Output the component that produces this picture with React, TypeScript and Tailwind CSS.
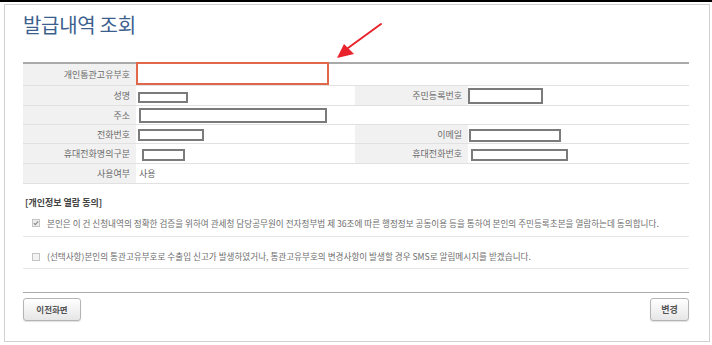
import React from "react";

const font = { fontFamily: '"Noto Sans CJK KR", "Noto Sans", sans-serif' };

function Box({ w, h, ml = 0, mt = 0 }: { w: number; h: number; ml?: number; mt?: number }) {
  return (
    <div
      className="border-2 border-[#7b7b7b] bg-white box-border"
      style={{ width: w, height: h, marginLeft: ml, marginTop: mt }}
    />
  );
}

function Label({ children }: { children: React.ReactNode }) {
  return (
    <div className="w-[113px] shrink-0 bg-[#f1f1f1] flex items-center justify-end pr-[6px] text-[9px] text-[#6b6b6b] leading-none">
      {children}
    </div>
  );
}

function Check({ checked }: { checked?: boolean }) {
  return (
    <svg width="8" height="8" viewBox="0 0 8 8" className="shrink-0">
      <rect x="0.5" y="0.5" width="7" height="7" fill={checked ? "#ececec" : "#f2f2f2"} stroke="#c4c4c4" />
      {checked && <path d="M1.8 4.2 L3.3 5.6 L6.2 2.3" fill="none" stroke="#8a8a8a" strokeWidth="1.1" />}
    </svg>
  );
}

export default function App() {
  return (
    <div className="w-[712px] h-[345px] bg-white relative overflow-hidden" style={font}>
      <div className="h-[2px] bg-black" />
      <div className="ml-[4px] mt-[2px] w-[706px] h-[338px] border border-[#d2d2d2] box-border pl-[18px] pr-[20px] pt-[8px]">
        <div className="h-[24px] leading-[24px] text-[20px] tracking-[-0.3px] text-[#3d5f8e]">발급내역 조회</div>

        {/* table */}
        <div className="mt-[25px] w-[666px] border-t-2 border-[#a9a9a9]">
          {/* row 1 */}
          <div className="flex h-[22px] border-b border-[#e1e1e1]">
            <Label>개인통관고유부호</Label>
            <div className="relative flex-1">
              <div className="absolute left-0 top-[-2px] w-[193px] h-[23px] border-2 border-[#e0674a] box-border" />
            </div>
          </div>
          {/* row 2 */}
          <div className="flex h-[20px] border-b border-[#e1e1e1]">
            <Label>성명</Label>
            <div className="w-[219px] flex items-start">
              <Box w={50} h={11} ml={2} mt={6} />
            </div>
            <Label>주민등록번호</Label>
            <div className="flex-1 flex items-start">
              <Box w={75} h={16} mt={2} />
            </div>
          </div>
          {/* row 3 */}
          <div className="flex h-[19px] border-b border-[#e1e1e1]">
            <Label>주소</Label>
            <div className="flex-1 flex items-start">
              <Box w={188} h={15} ml={3} mt={2} />
            </div>
          </div>
          {/* row 4 */}
          <div className="flex h-[19px] border-b border-[#e1e1e1]">
            <Label>전화번호</Label>
            <div className="w-[219px] flex items-start">
              <Box w={66} h={12} ml={2} mt={4} />
            </div>
            <Label>이메일</Label>
            <div className="flex-1 flex items-start">
              <Box w={92} h={13} ml={1} mt={4} />
            </div>
          </div>
          {/* row 5 */}
          <div className="flex h-[20px] border-b border-[#e1e1e1]">
            <Label>휴대전화명의구분</Label>
            <div className="w-[219px] flex items-start">
              <Box w={43} h={12} ml={6} mt={5} />
            </div>
            <Label>휴대전화번호</Label>
            <div className="flex-1 flex items-start">
              <Box w={97} h={12} ml={3} mt={5} />
            </div>
          </div>
          {/* row 6 */}
          <div className="flex h-[20px] border-b border-[#e1e1e1]">
            <Label>사용여부</Label>
            <div className="flex-1 flex items-center pl-[3px] text-[9px] text-[#666] leading-none">사용</div>
          </div>
        </div>

        {/* consent */}
        <div className="mt-[12px] h-[14px] leading-[14px] pl-[2px] text-[9px] font-bold text-[#444]">[개인정보 열람 동의]</div>
        <div className="w-[666px] h-[27px] border-b border-[#e6e6e6] flex items-center pl-[9px] gap-[7px] text-[8.6px] text-[#6e6e6e] leading-none">
          <Check checked />
          <span>본인은 이 건 신청내역의 정확한 검증을 위하여 관세청 담당공무원이 전자정부법 제 36조에 따른 행정정보 공동이용 등을 통하여 본인의 주민등록초본을 열람하는데 동의합니다.</span>
        </div>
        <div className="w-[666px] h-[32px] border-b border-[#e6e6e6] flex items-center pt-[8px] pl-[9px] gap-[7px] text-[8.6px] text-[#6e6e6e] leading-none">
          <Check />
          <span>(선택사항)본인의 통관고유부호로 수출입 신고가 발생하였거나, 통관고유부호의 변경사항이 발생할 경우 SMS로 알림메시지를 받겠습니다.</span>
        </div>
        <div className="w-[666px] h-[24px] border-b border-[#ababab]" />

        {/* buttons */}
        <div className="w-[666px] mt-[5px] flex justify-between">
          <button className="w-[58px] h-[23px] rounded-[3px] border border-[#b4b4b4] bg-gradient-to-b from-[#ffffff] to-[#e6e6e6] shadow-[0_1px_1px_rgba(0,0,0,0.12)] text-[8.5px] font-bold text-[#555] leading-none">
            이전화면
          </button>
          <button className="w-[39px] h-[23px] rounded-[3px] border border-[#b4b4b4] bg-gradient-to-b from-[#ffffff] to-[#e6e6e6] shadow-[0_1px_1px_rgba(0,0,0,0.12)] text-[9px] font-bold text-[#555] leading-none">
            변경
          </button>
        </div>
      </div>

      {/* red annotation arrow */}
      <svg className="absolute left-[330px] top-[18px]" width="60" height="45" viewBox="330 18 60 45">
        <line x1="381" y1="24" x2="348" y2="48" stroke="#e8232b" strokeWidth="2" strokeLinecap="round" />
        <polygon points="337,58 344,44 354,54" fill="#e8232b" />
      </svg>
    </div>
  );
}
